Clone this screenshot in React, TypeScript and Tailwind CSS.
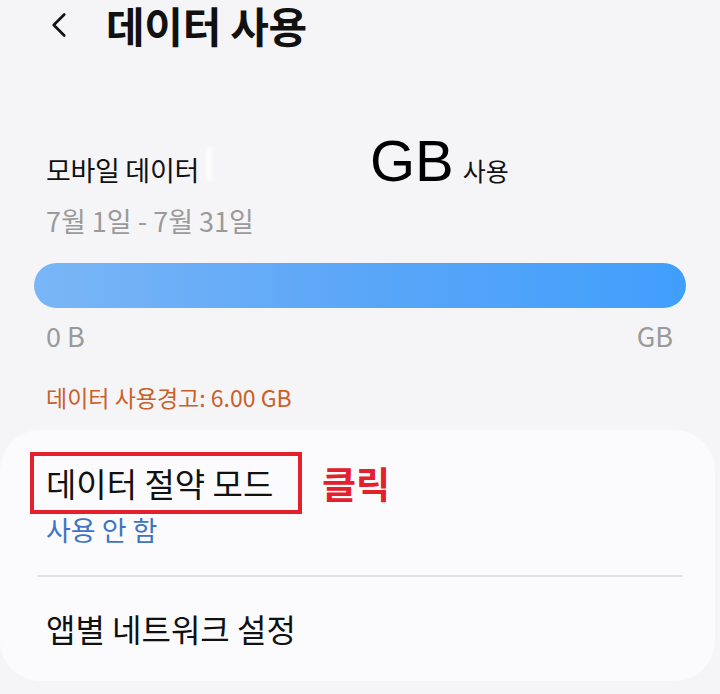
import { ChevronLeft } from 'lucide-react';

const font = { fontFamily: '"Noto Sans CJK KR", "Noto Sans", sans-serif' };

function UsageSummary() {
  return (
    <div className="px-[46px]">
      <div className="flex items-baseline mt-[82px]">
        <span className="text-[27px] leading-[30px] text-[#111] tracking-[-0.3px]">모바일 데이터</span>
        <span className="w-[6px] h-[34px] bg-white ml-[7px] opacity-70 blur-[1px]" />
        <span
          className="ml-[158px] text-[58px] leading-none text-black"
          style={{ fontFamily: '"Liberation Sans", Arial, sans-serif' }}
        >
          GB
        </span>
        <span className="ml-[9px] text-[25px] leading-[30px] text-[#111]">사용</span>
      </div>
      <div className="mt-[16px] text-[27px] leading-[30px] text-[#9a9a9a]">7월 1일 - 7월 31일</div>
    </div>
  );
}

export default function App() {
  return (
    <div className="w-[720px] h-[694px] bg-[#f5f5f7] overflow-hidden" style={font}>
      <div className="flex items-center h-[50px] pl-[38px]">
        <ChevronLeft className="w-[42px] h-[42px] text-[#111]" strokeWidth={1.5} />
        <h1 className="ml-[26px] text-[42px] leading-[50px] font-bold text-[#111] tracking-[-0.3px]">
          데이터 사용
        </h1>
      </div>

      <UsageSummary />

      <div className="mx-[34px] mt-[27px] h-[45px] rounded-full bg-gradient-to-r from-[#7ab6f6] via-[#5aa6f8] to-[#409ffc]" />

      <div className="flex justify-between pl-[46px] pr-[47px] mt-[13px] text-[27px] leading-[30px] text-[#9a9a9a]">
        <span>0 B</span>
        <span>GB</span>
      </div>

      <div className="px-[46px] mt-[31px] text-[23px] leading-[30px] text-[#c9602a]">
        데이터 사용경고: 6.00 GB
      </div>

      <div className="mt-[18px] mr-[5px] h-[251px] rounded-[40px] bg-[#fbfbfd] pt-[22px]">
        <div className="flex items-center pl-[30px]">
          <div className="w-[272px] h-[62px] border-[4px] border-[#e3202b] flex items-center pl-[12px]">
            <span className="text-[33px] leading-[40px] text-[#111]">데이터 절약 모드</span>
          </div>
          <span className="ml-[20px] text-[37px] leading-[40px] font-bold text-[#e3202b]">클릭</span>
        </div>
        <div className="pl-[46px] h-[32px] text-[27px] leading-[32px] text-[#3f74c4]">사용 안 함</div>
        <div className="ml-[37px] mr-[32px] mt-[29px] h-[2px] bg-[#e3e3e5]" />
        <div className="pl-[46px] mt-[31px] text-[32px] leading-[40px] text-[#111]">앱별 네트워크 설정</div>
      </div>
    </div>
  );
}
